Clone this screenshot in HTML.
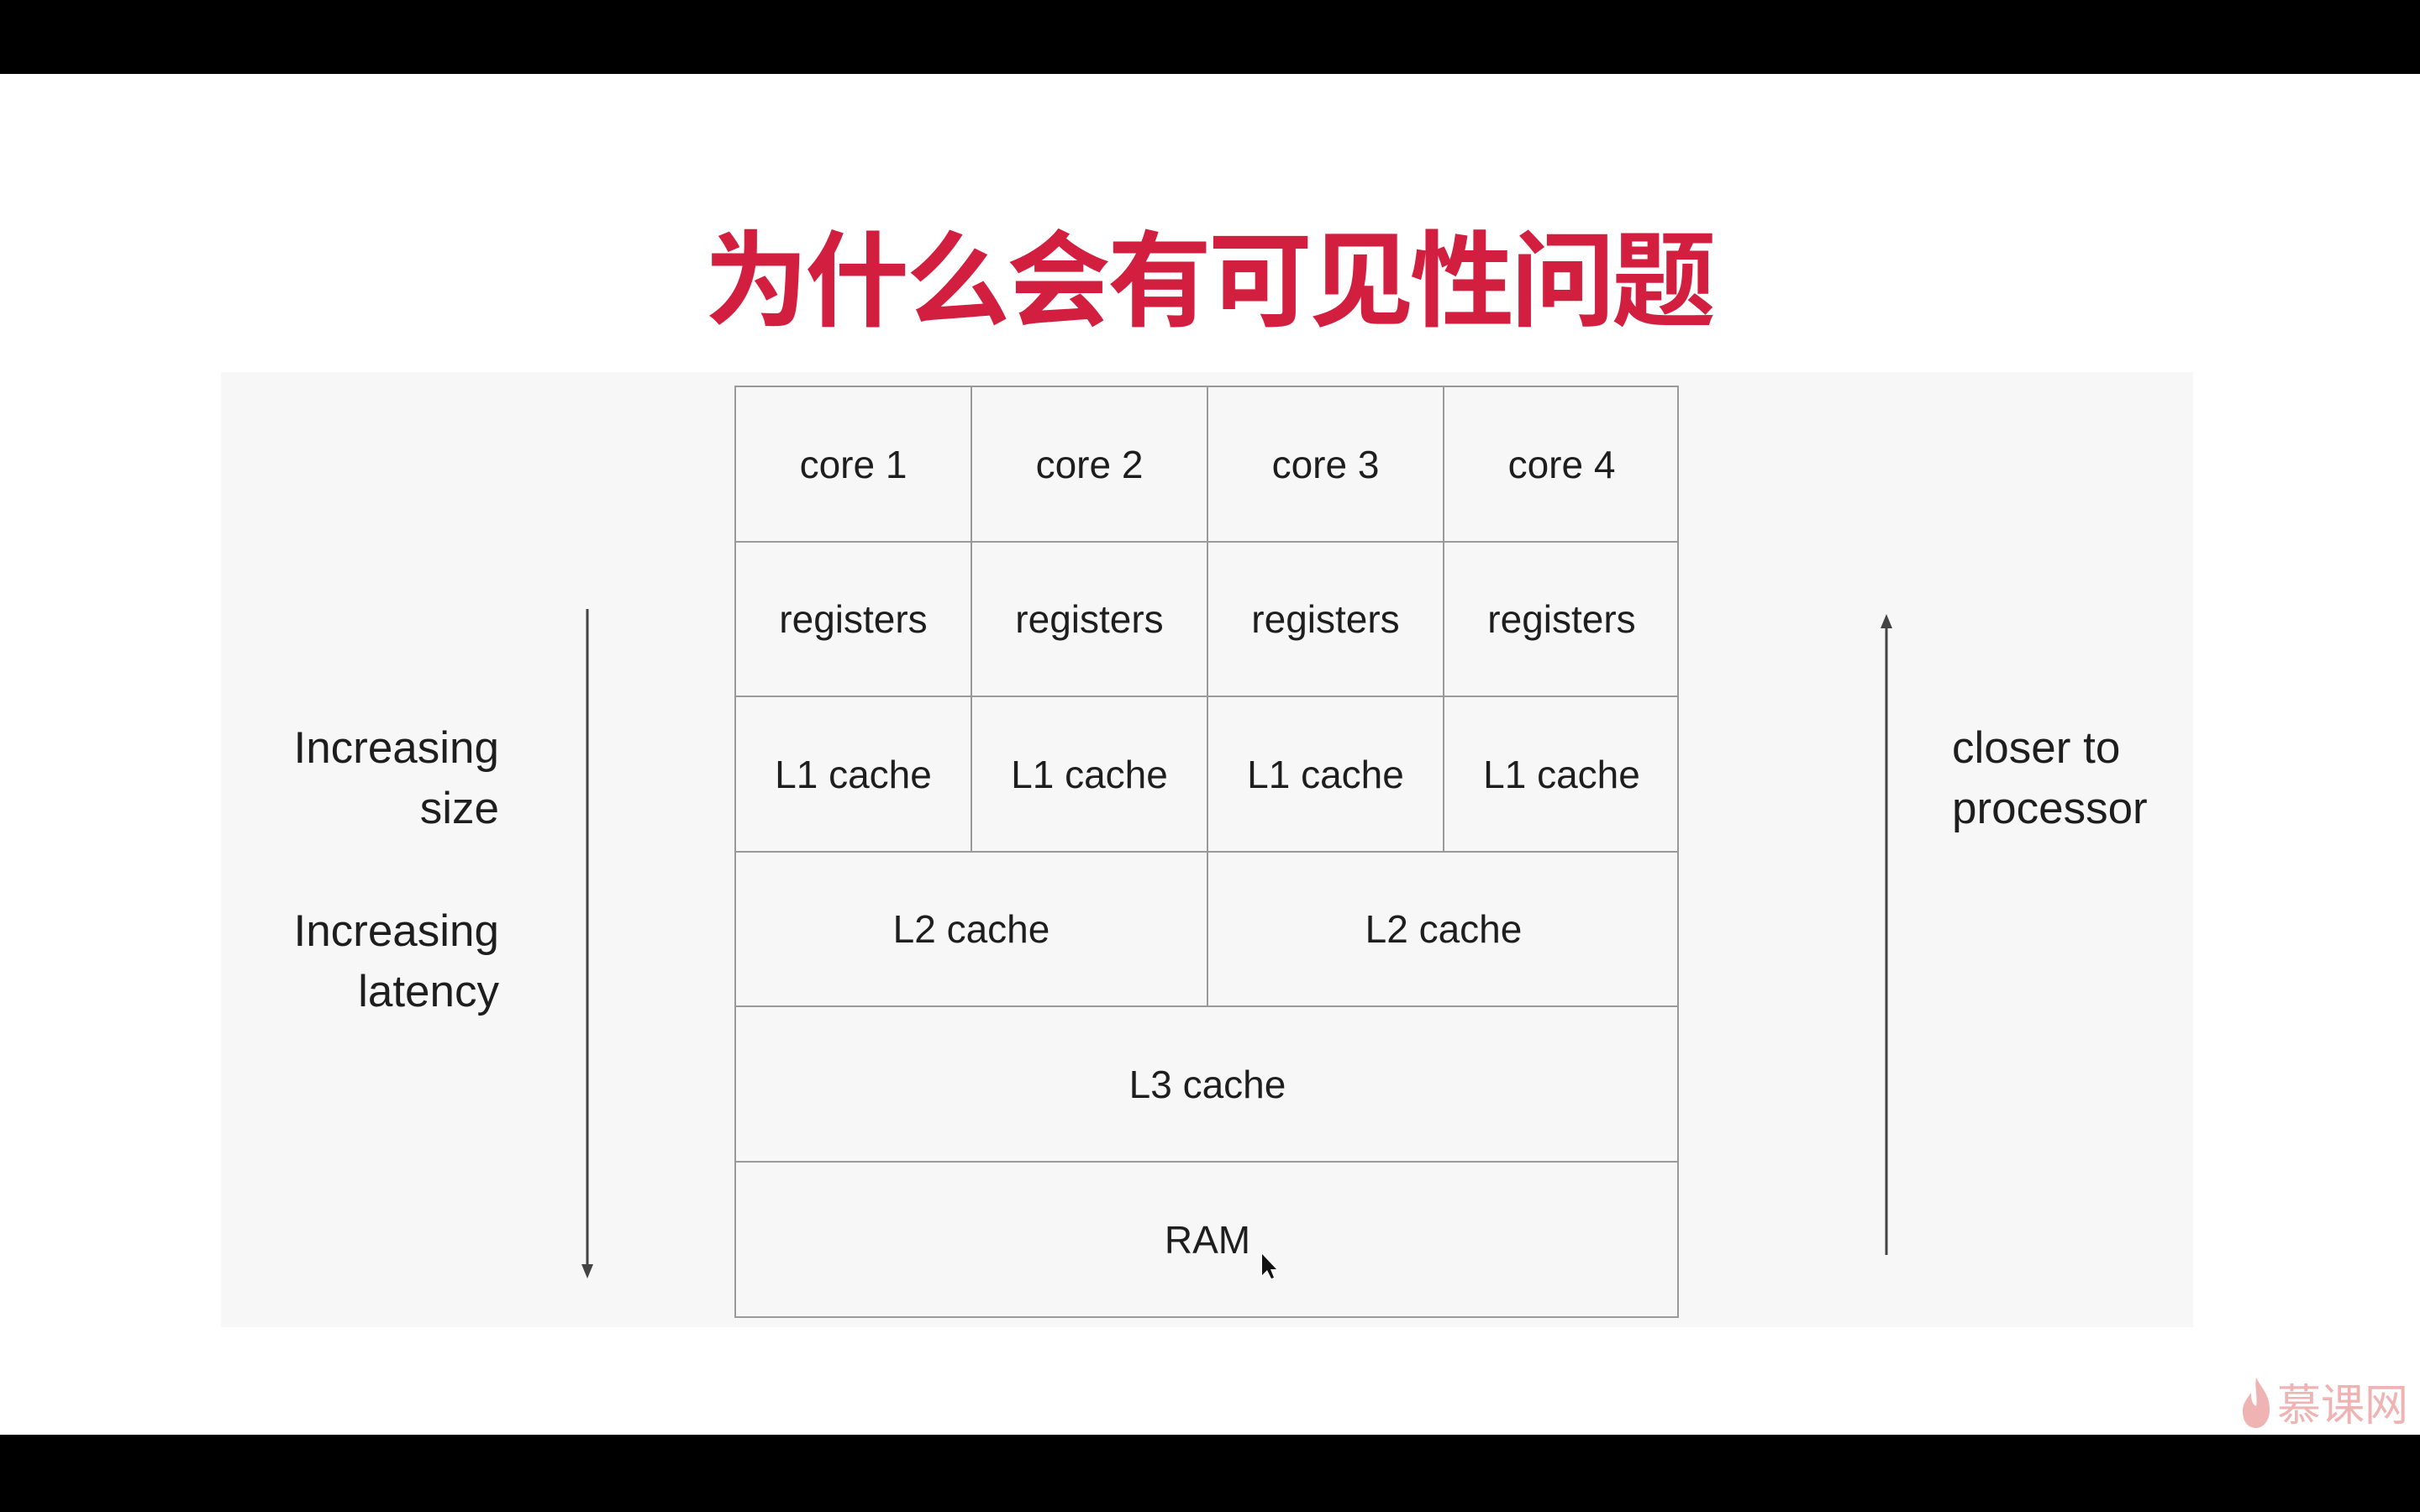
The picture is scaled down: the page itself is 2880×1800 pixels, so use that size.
<!DOCTYPE html>
<html><head><meta charset="utf-8"><style>
body{margin:0;width:2880px;height:1800px;background:#fff;position:relative;overflow:hidden;font-family:"Liberation Sans","Noto Sans CJK SC",sans-serif}
.bar{position:absolute;left:0;width:2880px;background:#000}
.title{position:absolute;left:838px;top:244px;font-family:"Noto Sans CJK SC",sans-serif;font-weight:700;font-size:124px;color:#d21f40;letter-spacing:-4px;white-space:nowrap;line-height:160px}
.panel{position:absolute;left:263px;top:443px;width:2347px;height:1137px;background:#f7f7f7}
.grid{position:absolute;left:874px;top:459px;width:1124px;height:1110px;border:2px solid #9a9a9a;box-sizing:border-box}
.c{position:absolute;border-right:2px solid #9a9a9a;border-bottom:2px solid #9a9a9a;box-sizing:border-box;display:flex;align-items:center;justify-content:center;font-size:46px;color:#1e1e1e}
.lt{position:absolute;font-size:53px;color:#1e1e1e;line-height:72px}
</style></head><body>
<div class="bar" style="top:0;height:88px"></div>
<div class="bar" style="top:1708px;height:92px"></div>
<div class="title">为什么会有可见性问题</div>
<div class="panel"></div>
<div class="grid">
<div class="c" style="left:0;top:0;width:281px;height:185px">core 1</div>
<div class="c" style="left:281px;top:0;width:281px;height:185px">core 2</div>
<div class="c" style="left:562px;top:0;width:281px;height:185px">core 3</div>
<div class="c" style="left:843px;top:0;width:279px;height:185px;border-right:none">core 4</div>
<div class="c" style="left:0;top:185px;width:281px;height:184px">registers</div>
<div class="c" style="left:281px;top:185px;width:281px;height:184px">registers</div>
<div class="c" style="left:562px;top:185px;width:281px;height:184px">registers</div>
<div class="c" style="left:843px;top:185px;width:279px;height:184px;border-right:none">registers</div>
<div class="c" style="left:0;top:369px;width:281px;height:185px">L1 cache</div>
<div class="c" style="left:281px;top:369px;width:281px;height:185px">L1 cache</div>
<div class="c" style="left:562px;top:369px;width:281px;height:185px">L1 cache</div>
<div class="c" style="left:843px;top:369px;width:279px;height:185px;border-right:none">L1 cache</div>
<div class="c" style="left:0;top:554px;width:562px;height:184px">L2 cache</div>
<div class="c" style="left:562px;top:554px;width:560px;height:184px;border-right:none">L2 cache</div>
<div class="c" style="left:0;top:738px;width:1122px;height:185px;border-right:none">L3 cache</div>
<div class="c" style="left:0;top:923px;width:1122px;height:183px;border:none">RAM</div>
</div>
<div class="lt" style="right:2286px;top:855px;text-align:right">Increasing<br>size</div>
<div class="lt" style="right:2286px;top:1073px;text-align:right">Increasing<br>latency</div>
<div class="lt" style="left:2323px;top:855px">closer to<br>processor</div>
<svg style="position:absolute;left:0;top:0" width="2880" height="1800">
<line x1="699" y1="725" x2="699" y2="1512" stroke="#444" stroke-width="3"/>
<polygon points="692,1505 706,1505 699,1522" fill="#444"/>
<line x1="2245" y1="740" x2="2245" y2="1494" stroke="#444" stroke-width="3"/>
<polygon points="2238,748 2252,748 2245,731" fill="#444"/>
<polygon points="1502,1493 1502,1518 1508,1512 1513,1522 1516,1521 1512,1511 1519,1511" fill="#111"/>
</svg>
<svg style="position:absolute;left:2665px;top:1638px" width="40" height="64" viewBox="0 0 40 64"><path d="M20 2 C26 14 36 22 36 40 C36 54 28 62 20 62 C10 62 4 54 4 42 C4 32 10 26 14 20 C14 30 16 34 20 36 C22 26 18 14 20 2Z" fill="#efb3b3"/></svg>
<div style="position:absolute;left:2710px;top:1636px;font-family:'Noto Sans CJK SC',sans-serif;font-size:52px;color:#efb3b3;line-height:66px">慕课网</div>
</body></html>
